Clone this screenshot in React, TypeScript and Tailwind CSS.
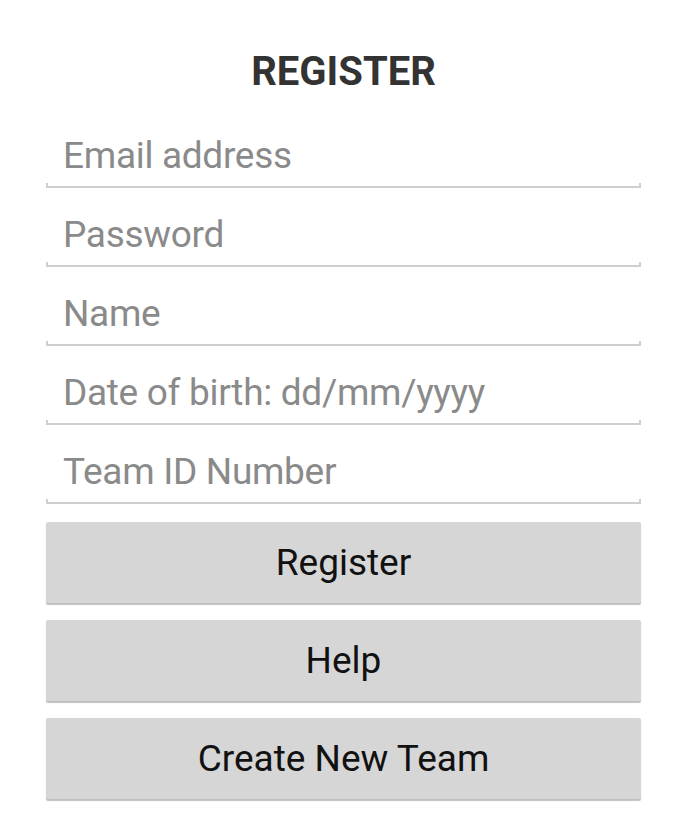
import React from 'react';

const fields = ['Email address', 'Password', 'Name', 'Date of birth: dd/mm/yyyy', 'Team ID Number'];
const buttons = ['Register', 'Help', 'Create New Team'];

const Field: React.FC<{ hint: string }> = ({ hint }) => (
  <div className="relative h-[79px] flex flex-col justify-end">
    <div className="pl-[17px] pb-[10px] text-[37px] leading-[40px] text-[#8a8a8a] tracking-[-0.3px]">{hint}</div>
    <div className="relative h-[2px] bg-[#cfcfcf]">
      <span className="absolute left-0 bottom-0 w-[2px] h-[5px] bg-[#cfcfcf]"></span>
      <span className="absolute right-0 bottom-0 w-[2px] h-[5px] bg-[#cfcfcf]"></span>
    </div>
  </div>
);

export default function App() {
  return (
    <div className="w-[692px] h-[832px] bg-white" style={{ fontFamily: 'Roboto, "Liberation Sans", sans-serif' }}>
      <div className="px-[46px] pt-[48px] w-[687px]">
        <h1 className="text-center text-[40px] leading-[48px] font-bold text-[#333333] mb-[13px]">REGISTER</h1>
        <div>
          {fields.map((f) => (
            <Field key={f} hint={f} />
          ))}
        </div>
        <div className="flex flex-col gap-[17px] mt-[18px]">
          {buttons.map((b) => (
            <button
              key={b}
              className="h-[81px] w-full bg-[#d6d6d6] rounded-[2px] text-[37px] text-[#111111] shadow-[0_2px_1px_rgba(0,0,0,0.25)]"
            >
              {b}
            </button>
          ))}
        </div>
      </div>
    </div>
  );
}
